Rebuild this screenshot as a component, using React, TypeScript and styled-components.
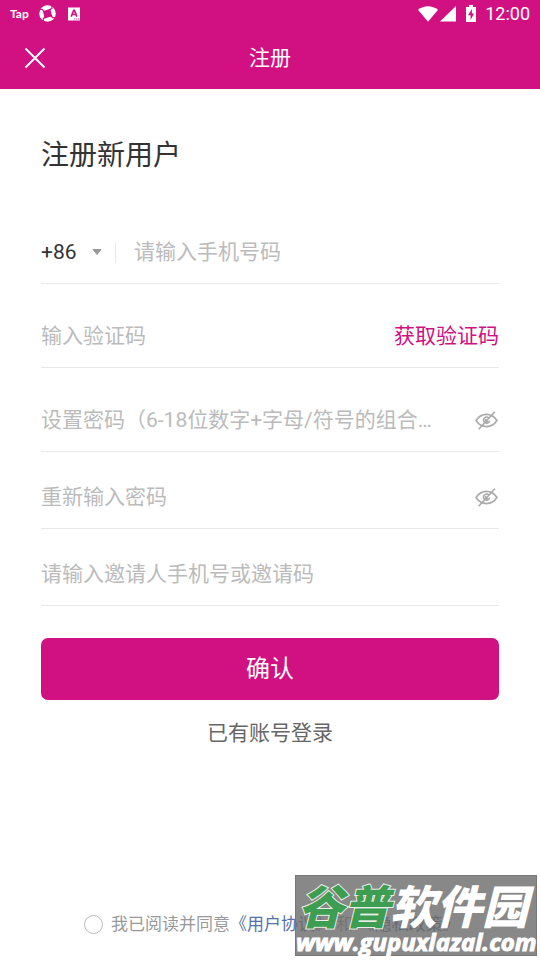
import React from 'react';
import styled, { createGlobalStyle } from 'styled-components';

const PINK = '#d11181';

const GlobalStyle = createGlobalStyle`
  *, *::before, *::after { box-sizing: border-box; }
  body { margin: 0; background: #fff; }
  body, button, input, select {
    font-family: Roboto, "Noto Sans CJK SC", sans-serif;
  }
  button { border: 0; padding: 0; background: none; cursor: pointer; }
`;

const Page = styled.div`
  position: relative;
  display: flex;
  flex-direction: column;
  min-height: 100vh;
  background: #fff;
`;

const TopArea = styled.header`
  background: ${PINK};
  color: #fff;
`;

const StatusBar = styled.div`
  display: flex;
  justify-content: space-between;
  align-items: center;
  height: 27px;
  padding: 0 10px;
`;

const StatusGroup = styled.div<{ $gap: number }>`
  display: flex;
  align-items: center;
  gap: ${(p) => p.$gap}px;
`;

const TapMark = styled.span`
  width: 20px;
  font: 700 12px/16px Lato, sans-serif;
`;

const Clock = styled.time`
  font-size: 18px;
  line-height: 20px;
`;

const NavBar = styled.div`
  display: grid;
  grid-template-columns: 70px 1fr 70px;
  align-items: center;
  height: 62px;
`;

const CloseButton = styled.button`
  display: flex;
  width: 70px;
  height: 62px;
  align-items: center;
  justify-content: center;
  color: #fff;
`;

const NavTitle = styled.div`
  text-align: center;
  font-size: 21px;
  line-height: 30px;
`;

const Form = styled.form`
  display: flex;
  flex-direction: column;
  flex: 1;
  padding: 47px 41px 24px;
`;

const Heading = styled.h1`
  margin: 0 0 24px;
  color: #333;
  font-size: 28px;
  font-weight: 400;
  line-height: 40px;
`;

const Row = styled.div<{ $compact?: boolean }>`
  display: flex;
  align-items: flex-end;
  height: ${(p) => (p.$compact ? 77 : 84)}px;
  padding-bottom: 16px;
  border-bottom: 1px solid #e8e8e8;
`;

const Field = styled.input`
  flex: 1;
  min-width: 0;
  height: 30px;
  padding: 0;
  border: 0;
  outline: 0;
  background: transparent;
  color: #333;
  font-size: 21px;
  line-height: 30px;
  text-overflow: ellipsis;
  &::placeholder { color: #bbb; opacity: 1; }
`;

const CodePicker = styled.div`
  display: grid;
  grid-template-columns: 1fr 12px;
  align-items: center;
  width: 75px;
  height: 30px;
  margin-right: 18px;
  padding-right: 13px;
  position: relative;
  &::after {
    content: "";
    position: absolute;
    right: 0;
    top: 5px;
    height: 21px;
    border-right: 1px solid #e8e8e8;
  }
`;

const CodeSelect = styled.select`
  grid-area: 1 / 1 / 2 / 3;
  width: 100%;
  height: 30px;
  padding: 0;
  border: 0;
  outline: 0;
  appearance: none;
  background: transparent;
  color: #333;
  font-size: 21px;
  line-height: 30px;
`;

const Caret = styled.svg`
  grid-area: 1 / 2 / 2 / 3;
  pointer-events: none;
`;

const SendCode = styled.button`
  color: ${PINK};
  font-size: 21px;
  line-height: 30px;
`;

const EyeButton = styled.button`
  display: flex;
  align-items: center;
  justify-content: flex-end;
  width: 64px;
  height: 30px;
  padding-right: 1px;
  color: #aaa;
`;

const Submit = styled.button`
  height: 62px;
  margin-top: 32px;
  border-radius: 7px;
  background: ${PINK};
  color: #fff;
  font-size: 24px;
  line-height: 34px;
`;

const LoginLink = styled.a`
  align-self: center;
  margin-top: 18px;
  color: #666;
  font-size: 21px;
  line-height: 30px;
  text-decoration: none;
`;

const Agreement = styled.div`
  display: flex;
  align-items: center;
  gap: 8px;
  margin-top: auto;
  padding-left: 43px;
  color: #999;
  font-size: 17px;
  line-height: 24px;
  white-space: nowrap;
`;

const Tick = styled.input`
  appearance: none;
  flex: none;
  width: 19px;
  height: 19px;
  margin: 0;
  border: 1px solid #bbb;
  border-radius: 50%;
  &:checked { background: ${PINK}; }
`;

const PolicyLink = styled.a`
  color: #5671a8;
  text-decoration: none;
`;

const Watermark = styled.div`
  position: absolute;
  right: 3px;
  bottom: 4px;
  width: 242px;
  height: 81px;
  border: 1px solid #777;
  background: rgba(106, 106, 106, 0.8);
  color: #fff;
  font-style: italic;
  white-space: nowrap;
  pointer-events: none;
`;

const WatermarkName = styled.div`
  padding-left: 2px;
  font-family: "Noto Sans CJK SC", sans-serif;
  font-size: 46px;
  font-weight: 900;
  line-height: 56px;
`;

const GreenName = styled.span`
  color: #3d9d50;
  -webkit-text-stroke: 2px #e8eee8;
  paint-order: stroke fill;
`;

const WatermarkSite = styled.div`
  font-family: "Open Sans", sans-serif;
  font-size: 24px;
  font-weight: 700;
  line-height: 20px;
  -webkit-text-stroke: 1px #fff;
`;

const EyeOff = () => (
  <svg width="23" height="19" viewBox="0 0 24 20" fill="none" stroke="currentColor" strokeWidth="1.7" aria-hidden="true">
    <path d="M1 10C4 5.5 8 3.6 12 3.6S20 5.5 23 10C20 14.5 16 16.4 12 16.4S4 14.5 1 10Z" />
    <path d="M14.5 7.5A3.2 3.2 0 1 0 15.2 10" />
    <path d="M12 8.6a1.4 1.4 0 1 0 1.5 2" />
    <path d="M20.8.8 3.8 19.2" />
  </svg>
);

export default function App() {
  return (
    <>
      <GlobalStyle />
      <Page>
        <TopArea>
          <StatusBar>
            <StatusGroup $gap={9}>
              <TapMark>Tap</TapMark>
              <svg width="17" height="17" viewBox="0 0 17 17" aria-hidden="true">
                <circle cx="8.5" cy="8.5" r="8.3" fill="#fff" />
                <path d="M5.2 5.8 9.8 4.2 13.6 2.6 11.6 5.6 12.8 9.8 14.4 13.4 11.3 11.7 7.3 12.9 3.4 14.4 5.2 11.5 4.2 7.2 2.6 3.5Z" fill={PINK} />
                <path d="M.6 4.6 4 4.4M12.6.4l.4 3.4M16.4 12.4l-3.4.4M4.6 16.6l-.4-3.2" stroke={PINK} strokeWidth="1" />
              </svg>
              <svg width="18" height="14" viewBox="0 0 18 14" aria-hidden="true">
                <path fill="#fff" d="M3 .5h12v13H3z" />
                <path d="m6.2 9.6 2.5-6.2h.7l2.5 6.2M7.2 7.5h3.8" fill="none" stroke={PINK} strokeWidth="1.6" />
                <path d="M9 12h1.2M11 12h1.2M13 12h1" stroke={PINK} strokeWidth=".8" />
              </svg>
            </StatusGroup>
            <StatusGroup $gap={2}>
              <svg width="20" height="16" viewBox="0 0 20 16" aria-hidden="true">
                <path fill="#fff" d="M0 3.8C6-1 14-1 20 3.8L10 15.7Z" />
              </svg>
              <svg width="16" height="16" viewBox="0 0 16 16" aria-hidden="true">
                <path fill="#fff" d="M16 0v15.5H0Z" />
              </svg>
              <svg width="25" height="18" viewBox="0 0 25 18" aria-hidden="true">
                <path fill="#fff" d="M11 0h4v2h3v15H8V2h3Z" />
                <path fill={PINK} d="M13.9 4 10 10.3h2.6V15L16 8.4h-2.1Z" />
              </svg>
              <Clock>12:00</Clock>
            </StatusGroup>
          </StatusBar>
          <NavBar>
            <CloseButton type="button" aria-label="关闭">
              <svg width="22" height="22" viewBox="0 0 22 22" fill="none" stroke="currentColor" strokeWidth="1.9" aria-hidden="true">
                <path d="m1.5 1.5 19 19m0-19-19 19" />
              </svg>
            </CloseButton>
            <NavTitle>注册</NavTitle>
          </NavBar>
        </TopArea>

        <Form onSubmit={(e) => e.preventDefault()}>
          <Heading>注册新用户</Heading>
          <Row>
            <CodePicker>
              <CodeSelect aria-label="国家区号" defaultValue="+86">
                <option>+86</option>
              </CodeSelect>
              <Caret width="12" height="8" viewBox="0 0 12 8" aria-hidden="true">
                <path d="M2 1.5h8L6 6.5Z" fill="#999" stroke="#999" strokeLinejoin="round" />
              </Caret>
            </CodePicker>
            <Field type="tel" aria-label="手机号码" placeholder="请输入手机号码" />
          </Row>
          <Row>
            <Field aria-label="验证码" placeholder="输入验证码" />
            <SendCode type="button">获取验证码</SendCode>
          </Row>
          <Row>
            <Field type="password" aria-label="设置密码" placeholder="设置密码（6-18位数字+字母/符号的组合）" />
            <EyeButton type="button" aria-label="显示密码"><EyeOff /></EyeButton>
          </Row>
          <Row $compact>
            <Field type="password" aria-label="重新输入密码" placeholder="重新输入密码" />
            <EyeButton type="button" aria-label="显示密码"><EyeOff /></EyeButton>
          </Row>
          <Row $compact>
            <Field aria-label="邀请人手机号或邀请码" placeholder="请输入邀请人手机号或邀请码" />
          </Row>
          <Submit type="submit">确认</Submit>
          <LoginLink href="#login">已有账号登录</LoginLink>
          <Agreement>
            <Tick id="agree" type="checkbox" />
            <div>
              <label htmlFor="agree">我已阅读并同意</label>
              <PolicyLink href="#terms">《用户协议》</PolicyLink>
              {' 和 '}
              <PolicyLink href="#privacy">《隐私政策》</PolicyLink>
            </div>
          </Agreement>
        </Form>

        <Watermark>
          <WatermarkName><GreenName>谷普</GreenName>软件园</WatermarkName>
          <WatermarkSite>www.gupuxlazal.com</WatermarkSite>
        </Watermark>
      </Page>
    </>
  );
}
